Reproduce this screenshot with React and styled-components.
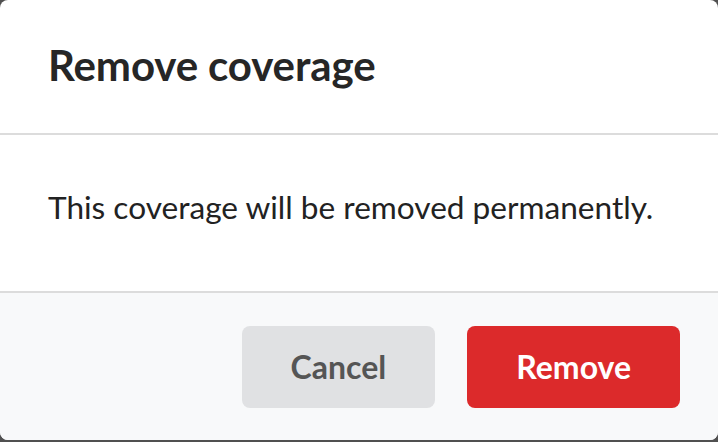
import React from "react";
import styled, { createGlobalStyle } from "styled-components";

const GlobalStyle = createGlobalStyle`
  html, body {
    margin: 0;
    padding: 0;
    background: #505050;
  }
  body {
    font-family: Lato, "Open Sans", sans-serif;
  }
`;

const Modal = styled.div`
  width: 718px;
  height: 440px;
  background: #fff;
  border-radius: 8px;
  overflow: hidden;
  display: flex;
  flex-direction: column;
`;

const Header = styled.div`
  height: 135px;
  border-bottom: 2px solid #dcdcdc;
  display: flex;
  align-items: center;
  padding: 0 48px 4px;
  box-sizing: border-box;
  flex-shrink: 0;
`;

const Title = styled.h2`
  margin: 0;
  font-size: 42px;
  font-weight: 700;
  color: #262626;
  letter-spacing: -0.1px;
`;

const Body = styled.div`
  flex: 1;
  display: flex;
  align-items: center;
  padding: 0 48px 13px;
`;

const Message = styled.p`
  margin: 0;
  font-size: 31.6px;
  color: #222;
`;

const Footer = styled.div`
  height: 147px;
  flex-shrink: 0;
  border-top: 2px solid #dcdcdc;
  background: #f8f9fa;
  display: flex;
  align-items: center;
  justify-content: flex-end;
  gap: 32px;
  padding-right: 38px;
`;

const Button = styled.button`
  height: 82px;
  padding: 0 49px;
  border: none;
  border-radius: 8px;
  font-family: Lato, sans-serif;
  font-size: 32px;
  font-weight: 700;
  cursor: pointer;
  background: ${(p) => (p.$danger ? "#dc2a2b" : "#e0e1e3")};
  color: ${(p) => (p.$danger ? "#fff" : "#555")};
`;

export default function App() {
  return (
    <>
      <GlobalStyle />
      <Modal>
        <Header>
          <Title>Remove coverage</Title>
        </Header>
        <Body>
          <Message>This coverage will be removed permanently.</Message>
        </Body>
        <Footer>
          <Button>Cancel</Button>
          <Button $danger>Remove</Button>
        </Footer>
      </Modal>
    </>
  );
}
